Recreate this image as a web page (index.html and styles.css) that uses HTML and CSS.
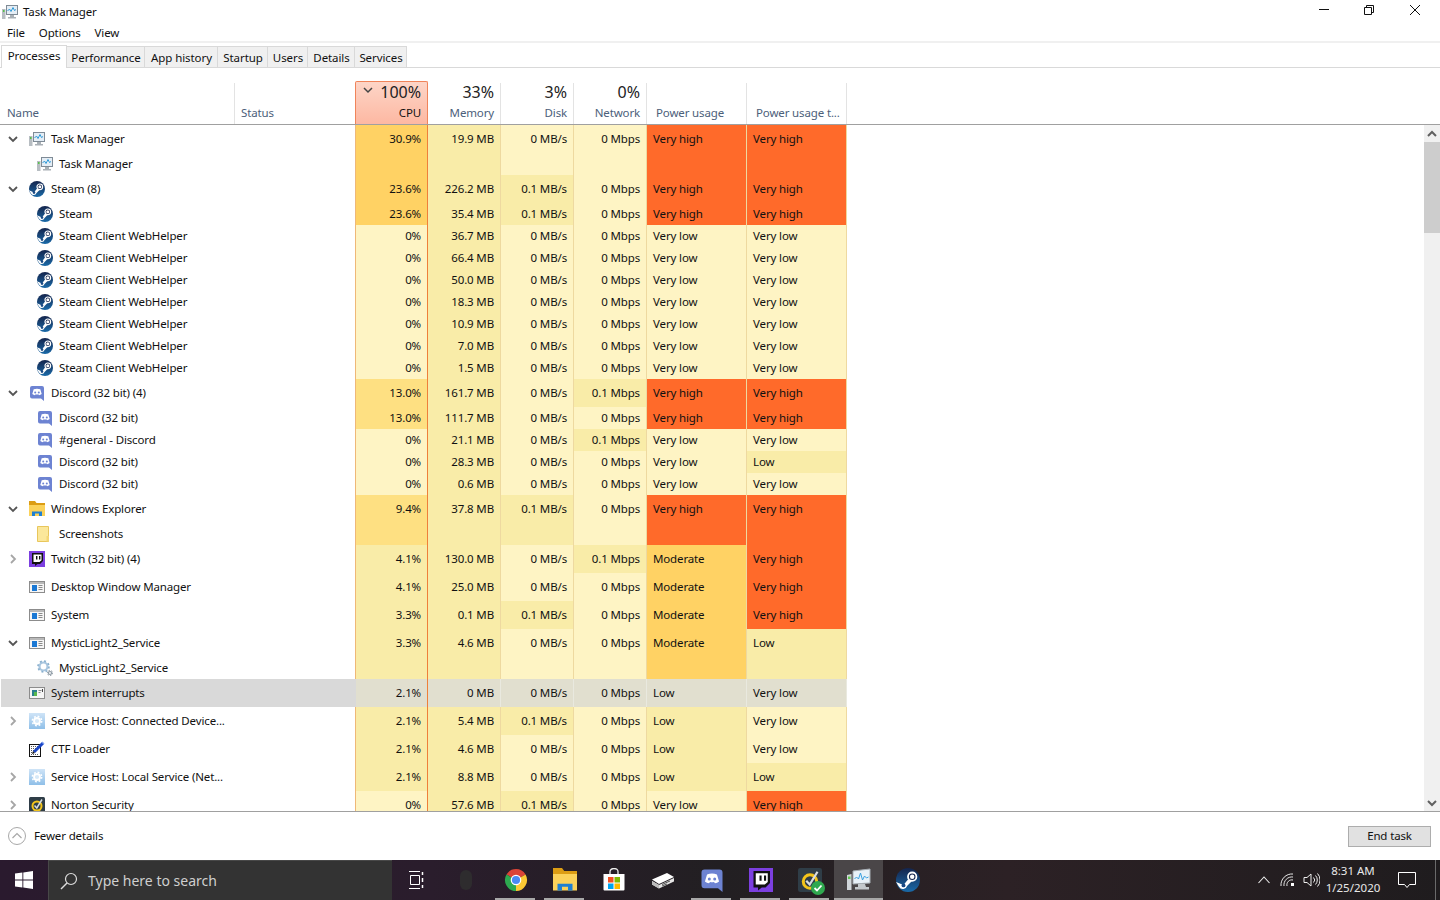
FILE: index.html
```html
<!DOCTYPE html>
<html lang="en">
<head>
<meta charset="utf-8">
<title>Task Manager</title>
<link rel="stylesheet" href="styles.css">
</head>
<body>
<svg class="defs" aria-hidden="true">
  <defs>
    <linearGradient id="g-steam" x1="0" y1="0" x2="0" y2="1"><stop offset="0" stop-color="#14244c"/><stop offset="1" stop-color="#1a6aa8"/></linearGradient>
    <linearGradient id="g-svc" x1="0" y1="0" x2="0" y2="1"><stop offset="0" stop-color="#cfe4f7"/><stop offset="1" stop-color="#8fbfe8"/></linearGradient>
    <symbol id="chev-d" viewBox="0 0 10 10"><path d="M1 3l4 4 4-4" fill="none" stroke="#555" stroke-width="1.800"/></symbol>
    <symbol id="chev-r" viewBox="0 0 10 10"><path d="M3 1l4 4-4 4" fill="none" stroke="#a6a6a6" stroke-width="1.800"/></symbol>
    <symbol id="i-tm" viewBox="0 0 16 16">
      <rect x="4.500" y="1.500" width="11" height="9" fill="#e4edf5" stroke="#7f8b96"/>
      <path d="M5.500 7l2-2 1.500 2.500 2-4 1.500 3 1.500-1" fill="none" stroke="#2f9ad8"/>
      <path d="M8 11h4v2h2v1.500H6V13h2z" fill="#a9b0b6"/>
      <rect x="0" y="5" width="3.500" height="10" fill="#b7bdc2"/>
      <rect x="1" y="6" width="1.500" height="2" fill="#58c24a"/>
    </symbol>
    <symbol id="i-steam" viewBox="0 0 16 16">
      <circle cx="8" cy="8" r="8" fill="url(#g-steam)"/>
      <path d="M0 9.300l5 2.100 3-3.800 3 .8-3.500 3.500A3 3 0 0 1 2 12.500z" fill="#fff"/>
      <circle cx="10.800" cy="5.800" r="2.800" fill="#14244c" stroke="#fff" stroke-width="1.200"/>
      <circle cx="10.800" cy="5.800" r="1.500" fill="#fff"/>
      <circle cx="5" cy="11.600" r="1.300" fill="#1a4a84"/>
    </symbol>
    <symbol id="i-discord" viewBox="0 0 16 16">
      <path d="M3 1h10a2 2 0 0 1 2 2v13l-3-2.500H3a2 2 0 0 1-2-2V3a2 2 0 0 1 2-2z" fill="#6d83d2"/>
      <path d="M4.700 4.300q3.300-1.300 6.600 0l1.400 4.700q-1.200 1.100-2.700 1.200l-.7-.9q-1.300.4-2.600 0l-.7.9Q4.500 10.100 3.300 9z" fill="#fff"/>
      <circle cx="6.200" cy="7.400" r="1" fill="#6d83d2"/><circle cx="9.800" cy="7.400" r="1" fill="#6d83d2"/>
    </symbol>
    <symbol id="i-folder" viewBox="0 0 16 16">
      <path d="M0 0h6l1.500 2H16v6H0z" fill="#dc9d14"/>
      <rect x="0" y="4" width="16" height="11" fill="#fbd25a"/>
      <path d="M3 15v-4.500h10V15h-3v-2.500H6V15z" fill="#1f80d2"/>
    </symbol>
    <symbol id="i-page" viewBox="0 0 16 16">
      <path d="M.5.500h11v15H.5z" fill="#fbe79a" stroke="#e8c65c"/>
      <path d="M9.500 10h2.500v5.500H9.500z" fill="#f4d675"/>
    </symbol>
    <symbol id="i-twitch" viewBox="0 0 16 16">
      <rect width="16" height="16" fill="#7c3fe0"/>
      <path d="M3 2h11v8l-3 3H8.500L6 15v-2H3z" fill="#111"/>
      <path d="M4.500 3.500h8v5.800l-2 1.700h-6z" fill="#fff"/>
      <rect x="7" y="5" width="1.400" height="3.500" fill="#111"/><rect x="10" y="5" width="1.400" height="3.500" fill="#111"/>
    </symbol>
    <symbol id="i-win" viewBox="0 0 16 16">
      <rect x=".5" y="2.500" width="15" height="11" fill="#f6f6f6" stroke="#8c8c8c"/>
      <rect x="1" y="3" width="14" height="2" fill="#b9b9b9"/>
      <rect x="3" y="6" width="5" height="6" fill="#1a78d4"/>
      <path d="M9.500 6.500h4M9.500 8.500h4M9.500 10.500h4" stroke="#8a8a8a"/>
    </symbol>
    <symbol id="i-int" viewBox="0 0 16 16">
      <rect x=".5" y="2.500" width="15" height="11" fill="#f6f6f6" stroke="#8c8c8c"/>
      <rect x="3" y="5" width="5" height="6" fill="#2a7f8e"/>
      <rect x="5" y="7" width="3" height="4" fill="#58b84e"/>
      <path d="M9.500 5.500h3M9.500 7.500h2" stroke="#8a8a8a"/><rect x="13" y="4" width="1" height="3" fill="#444"/>
    </symbol>
    <symbol id="i-gear" viewBox="0 0 16 16">
      <circle cx="6.500" cy="6.500" r="4" fill="#fff" stroke="#a9c6df" stroke-width="2.200"/>
      <circle cx="6.500" cy="6.500" r="5.500" fill="none" stroke="#87aecd" stroke-width="1.600" stroke-dasharray="2 2.300"/>
      <circle cx="13" cy="13" r="1.500" fill="#fff" stroke="#8c9aa5" stroke-width="1.200"/>
      <circle cx="13" cy="13" r="2.600" fill="none" stroke="#7d8b96" stroke-width="1" stroke-dasharray="1.300 1.300"/>
    </symbol>
    <symbol id="i-svc" viewBox="0 0 16 16">
      <rect width="16" height="16" fill="url(#g-svc)"/>
      <circle cx="8" cy="8" r="3" fill="#d7e9f8" stroke="#fff" stroke-width="1.800"/>
      <circle cx="8" cy="8" r="4.700" fill="none" stroke="#fff" stroke-width="1.500" stroke-dasharray="1.800 1.900"/>
    </symbol>
    <symbol id="i-ctf" viewBox="0 0 16 16">
      <rect x=".5" y="3.500" width="11" height="12" fill="#fff" stroke="#111"/>
      <path d="M2 5.500h8M2 7.500h6M2 9.500h5M2 11.500h4M2 13.500h7" stroke="#555" stroke-dasharray="1 1"/>
      <path d="M5 11L14 2" stroke="#1b46c8" stroke-width="3"/>
      <path d="M3 13l1-3 2 2z" fill="#111"/><path d="M13.500 .5l2 2-1 1-2-2z" fill="#7fa0f0"/>
    </symbol>
    <symbol id="i-norton" viewBox="0 0 16 16">
      <rect width="16" height="16" rx="1.500" fill="#2f3d47"/>
      <circle cx="8" cy="9" r="4.500" fill="none" stroke="#f3c41b" stroke-width="2"/>
      <path d="M5.500 8.500l2.300 2.500L13 2.500" fill="none" stroke="#d9dde0" stroke-width="1.500"/>
    </symbol>
    <symbol id="i-chrome" viewBox="0 0 24 24">
      <path d="M12 12L2.470 6.500A11 11 0 0 1 21.530 6.500z" fill="#db4437"/>
      <path d="M12 12L21.530 6.500A11 11 0 0 1 12 23z" fill="#fcc934"/>
      <path d="M12 12L12 23A11 11 0 0 1 2.470 6.500z" fill="#2da94f"/>
      <circle cx="12" cy="12" r="5.300" fill="#fff"/><circle cx="12" cy="12" r="4.100" fill="#4a8af4"/>
    </symbol>
    <symbol id="i-store" viewBox="0 0 24 24">
      <path d="M8 7V3.500a4 3 0 0 1 8 0V7" fill="none" stroke="#eee" stroke-width="1.300"/>
      <path d="M1.500 6h21v15.500a1 1 0 0 1-1 1h-19a1 1 0 0 1-1-1z" fill="#fff"/>
      <rect x="6" y="9" width="5.500" height="5.500" fill="#f25022"/><rect x="12.500" y="9" width="5.500" height="5.500" fill="#7fba00"/>
      <rect x="6" y="15.500" width="5.500" height="5.500" fill="#00a4ef"/><rect x="12.500" y="15.500" width="5.500" height="5.500" fill="#ffb900"/>
    </symbol>
    <symbol id="i-box" viewBox="0 0 24 24">
      <path d="M1 11.500L16 5l7 4-15 7z" fill="#fff"/>
      <path d="M1 13l7 4 15-7v3.500L8 20.500l-7-4z" fill="#e4e4e4"/>
      <path d="M1 13l7 4v3.500l-7-4z" fill="#bcbcbc"/>
      <path d="M11 16.500l8-3.500M11 18l5-2" stroke="#555"/>
    </symbol>
    <symbol id="i-tmbig" viewBox="0 0 24 24">
      <path d="M6 3l17-2v14L6 16z" fill="#e8f1f8" stroke="#a6adb3"/>
      <path d="M7.500 11l2-2 2 2 2-6 2 7 2-4 2 2 2-1" fill="none" stroke="#3aa0e0"/>
      <path d="M11 16h7l1 3h3v2.500H8V19h3z" fill="#c3c8cc"/>
      <path d="M0 7l4.500-1v16H0z" fill="#d0d5d9"/><rect x="1" y="8.500" width="2.500" height="2.500" fill="#60c850"/>
    </symbol>
  </defs>
</svg>

<div class="app">
  <header class="titlebar">
    <svg class="ico"><use href="#i-tm"/></svg>
    <span class="title">Task Manager</span>
    <div class="winbtns">
      <div class="winbtn"><svg width="12" height="12" viewBox="0 0 12 12"><path d="M2 5.500h10" stroke="#111"/></svg></div>
      <div class="winbtn"><svg width="12" height="12" viewBox="0 0 12 12"><path d="M1.500 3.500h7v7h-7zM3.500 3.500v-2h7v7h-2" fill="none" stroke="#111"/></svg></div>
      <div class="winbtn"><svg width="12" height="12" viewBox="0 0 12 12"><path d="M1 1l10 10M11 1L1 11" stroke="#111"/></svg></div>
    </div>
  </header>
  <nav class="menu"><span>File</span><span>Options</span><span>View</span></nav>
  <div class="tabs">
    <div class="tab active">Processes</div>
    <div class="tab w78">Performance</div>
    <div class="tab w73">App history</div>
    <div class="tab w50">Startup</div>
    <div class="tab w40">Users</div>
    <div class="tab w47">Details</div>
    <div class="tab w52">Services</div>
  </div>

  <div class="thead">
    <div class="th left">Name</div>
    <div class="th left">Status</div>
    <div class="th cpuh"><div class="pct"><svg class="sort" viewBox="0 0 10 10"><path d="M1 3l4 4 4-4" fill="none" stroke="#444" stroke-width="1.500"/></svg>100%</div><div class="lab">CPU</div></div>
    <div class="th"><div class="pct">33%</div><div class="lab">Memory</div></div>
    <div class="th"><div class="pct">3%</div><div class="lab">Disk</div></div>
    <div class="th"><div class="pct">0%</div><div class="lab">Network</div></div>
    <div class="th left pw">Power usage</div>
    <div class="th left pw">Power usage t...</div>
  </div>

  <div class="tbody">
    <div class="rows">
      <div class="row"><div class="name"><svg class="chev"><use href="#chev-d"/></svg><svg class="ico"><use href="#i-tm"/></svg><span>Task Manager</span></div><div class="c cpu o">30.9%</div><div class="c m">19.9 MB</div><div class="c p">0 MB/s</div><div class="c p">0 Mbps</div><div class="t r">Very high</div><div class="t r">Very high</div></div>
      <div class="row sub"><div class="name"><svg class="ico"><use href="#i-tm"/></svg><span>Task Manager</span></div><div class="c cpu o"></div><div class="c m"></div><div class="c p"></div><div class="c p"></div><div class="t r"></div><div class="t r"></div></div>
      <div class="row"><div class="name"><svg class="chev"><use href="#chev-d"/></svg><svg class="ico"><use href="#i-steam"/></svg><span>Steam (8)</span></div><div class="c cpu o">23.6%</div><div class="c m">226.2 MB</div><div class="c m">0.1 MB/s</div><div class="c p">0 Mbps</div><div class="t r">Very high</div><div class="t r">Very high</div></div>
      <div class="row sub"><div class="name"><svg class="ico"><use href="#i-steam"/></svg><span>Steam</span></div><div class="c cpu o">23.6%</div><div class="c m">35.4 MB</div><div class="c m">0.1 MB/s</div><div class="c p">0 Mbps</div><div class="t r">Very high</div><div class="t r">Very high</div></div>
      <div class="row sub"><div class="name"><svg class="ico"><use href="#i-steam"/></svg><span>Steam Client WebHelper</span></div><div class="c cpu p">0%</div><div class="c m">36.7 MB</div><div class="c p">0 MB/s</div><div class="c p">0 Mbps</div><div class="t p">Very low</div><div class="t p">Very low</div></div>
      <div class="row sub"><div class="name"><svg class="ico"><use href="#i-steam"/></svg><span>Steam Client WebHelper</span></div><div class="c cpu p">0%</div><div class="c m">66.4 MB</div><div class="c p">0 MB/s</div><div class="c p">0 Mbps</div><div class="t p">Very low</div><div class="t p">Very low</div></div>
      <div class="row sub"><div class="name"><svg class="ico"><use href="#i-steam"/></svg><span>Steam Client WebHelper</span></div><div class="c cpu p">0%</div><div class="c m">50.0 MB</div><div class="c p">0 MB/s</div><div class="c p">0 Mbps</div><div class="t p">Very low</div><div class="t p">Very low</div></div>
      <div class="row sub"><div class="name"><svg class="ico"><use href="#i-steam"/></svg><span>Steam Client WebHelper</span></div><div class="c cpu p">0%</div><div class="c m">18.3 MB</div><div class="c p">0 MB/s</div><div class="c p">0 Mbps</div><div class="t p">Very low</div><div class="t p">Very low</div></div>
      <div class="row sub"><div class="name"><svg class="ico"><use href="#i-steam"/></svg><span>Steam Client WebHelper</span></div><div class="c cpu p">0%</div><div class="c m">10.9 MB</div><div class="c p">0 MB/s</div><div class="c p">0 Mbps</div><div class="t p">Very low</div><div class="t p">Very low</div></div>
      <div class="row sub"><div class="name"><svg class="ico"><use href="#i-steam"/></svg><span>Steam Client WebHelper</span></div><div class="c cpu p">0%</div><div class="c m">7.0 MB</div><div class="c p">0 MB/s</div><div class="c p">0 Mbps</div><div class="t p">Very low</div><div class="t p">Very low</div></div>
      <div class="row sub"><div class="name"><svg class="ico"><use href="#i-steam"/></svg><span>Steam Client WebHelper</span></div><div class="c cpu p">0%</div><div class="c m">1.5 MB</div><div class="c p">0 MB/s</div><div class="c p">0 Mbps</div><div class="t p">Very low</div><div class="t p">Very low</div></div>
      <div class="row"><div class="name"><svg class="chev"><use href="#chev-d"/></svg><svg class="ico"><use href="#i-discord"/></svg><span>Discord (32 bit) (4)</span></div><div class="c cpu a">13.0%</div><div class="c m">161.7 MB</div><div class="c p">0 MB/s</div><div class="c m">0.1 Mbps</div><div class="t r">Very high</div><div class="t r">Very high</div></div>
      <div class="row sub"><div class="name"><svg class="ico"><use href="#i-discord"/></svg><span>Discord (32 bit)</span></div><div class="c cpu a">13.0%</div><div class="c m">111.7 MB</div><div class="c p">0 MB/s</div><div class="c p">0 Mbps</div><div class="t r">Very high</div><div class="t r">Very high</div></div>
      <div class="row sub"><div class="name"><svg class="ico"><use href="#i-discord"/></svg><span>#general - Discord</span></div><div class="c cpu p">0%</div><div class="c m">21.1 MB</div><div class="c p">0 MB/s</div><div class="c m">0.1 Mbps</div><div class="t p">Very low</div><div class="t p">Very low</div></div>
      <div class="row sub"><div class="name"><svg class="ico"><use href="#i-discord"/></svg><span>Discord (32 bit)</span></div><div class="c cpu p">0%</div><div class="c m">28.3 MB</div><div class="c p">0 MB/s</div><div class="c p">0 Mbps</div><div class="t p">Very low</div><div class="t m">Low</div></div>
      <div class="row sub"><div class="name"><svg class="ico"><use href="#i-discord"/></svg><span>Discord (32 bit)</span></div><div class="c cpu p">0%</div><div class="c m">0.6 MB</div><div class="c p">0 MB/s</div><div class="c p">0 Mbps</div><div class="t p">Very low</div><div class="t p">Very low</div></div>
      <div class="row"><div class="name"><svg class="chev"><use href="#chev-d"/></svg><svg class="ico"><use href="#i-folder"/></svg><span>Windows Explorer</span></div><div class="c cpu a">9.4%</div><div class="c m">37.8 MB</div><div class="c m">0.1 MB/s</div><div class="c p">0 Mbps</div><div class="t r">Very high</div><div class="t r">Very high</div></div>
      <div class="row sub"><div class="name"><svg class="ico"><use href="#i-page"/></svg><span>Screenshots</span></div><div class="c cpu a"></div><div class="c m"></div><div class="c m"></div><div class="c p"></div><div class="t r"></div><div class="t r"></div></div>
      <div class="row"><div class="name"><svg class="chev"><use href="#chev-r"/></svg><svg class="ico"><use href="#i-twitch"/></svg><span>Twitch (32 bit) (4)</span></div><div class="c cpu m">4.1%</div><div class="c m">130.0 MB</div><div class="c p">0 MB/s</div><div class="c m">0.1 Mbps</div><div class="t o">Moderate</div><div class="t r">Very high</div></div>
      <div class="row"><div class="name"><i class="nochev"></i><svg class="ico"><use href="#i-win"/></svg><span>Desktop Window Manager</span></div><div class="c cpu m">4.1%</div><div class="c m">25.0 MB</div><div class="c p">0 MB/s</div><div class="c p">0 Mbps</div><div class="t o">Moderate</div><div class="t r">Very high</div></div>
      <div class="row"><div class="name"><i class="nochev"></i><svg class="ico"><use href="#i-win"/></svg><span>System</span></div><div class="c cpu m">3.3%</div><div class="c m">0.1 MB</div><div class="c m">0.1 MB/s</div><div class="c p">0 Mbps</div><div class="t o">Moderate</div><div class="t r">Very high</div></div>
      <div class="row"><div class="name"><svg class="chev"><use href="#chev-d"/></svg><svg class="ico"><use href="#i-win"/></svg><span>MysticLight2_Service</span></div><div class="c cpu m">3.3%</div><div class="c m">4.6 MB</div><div class="c p">0 MB/s</div><div class="c p">0 Mbps</div><div class="t o">Moderate</div><div class="t m">Low</div></div>
      <div class="row sub"><div class="name"><svg class="ico"><use href="#i-gear"/></svg><span>MysticLight2_Service</span></div><div class="c cpu m"></div><div class="c m"></div><div class="c p"></div><div class="c p"></div><div class="t o"></div><div class="t m"></div></div>
      <div class="row selected"><div class="name"><i class="nochev"></i><svg class="ico"><use href="#i-int"/></svg><span>System interrupts</span></div><div class="c cpu">2.1%</div><div class="c">0 MB</div><div class="c">0 MB/s</div><div class="c">0 Mbps</div><div class="t">Low</div><div class="t">Very low</div></div>
      <div class="row"><div class="name"><svg class="chev"><use href="#chev-r"/></svg><svg class="ico"><use href="#i-svc"/></svg><span>Service Host: Connected Device...</span></div><div class="c cpu m">2.1%</div><div class="c m">5.4 MB</div><div class="c m">0.1 MB/s</div><div class="c p">0 Mbps</div><div class="t m">Low</div><div class="t p">Very low</div></div>
      <div class="row"><div class="name"><i class="nochev"></i><svg class="ico"><use href="#i-ctf"/></svg><span>CTF Loader</span></div><div class="c cpu m">2.1%</div><div class="c m">4.6 MB</div><div class="c p">0 MB/s</div><div class="c p">0 Mbps</div><div class="t m">Low</div><div class="t p">Very low</div></div>
      <div class="row"><div class="name"><svg class="chev"><use href="#chev-r"/></svg><svg class="ico"><use href="#i-svc"/></svg><span>Service Host: Local Service (Net...</span></div><div class="c cpu m">2.1%</div><div class="c m">8.8 MB</div><div class="c p">0 MB/s</div><div class="c p">0 Mbps</div><div class="t m">Low</div><div class="t m">Low</div></div>
      <div class="row"><div class="name"><svg class="chev"><use href="#chev-r"/></svg><svg class="ico"><use href="#i-norton"/></svg><span>Norton Security</span></div><div class="c cpu p">0%</div><div class="c m">57.6 MB</div><div class="c m">0.1 MB/s</div><div class="c p">0 Mbps</div><div class="t p">Very low</div><div class="t r">Very high</div></div>
    </div>
    <div class="scrollbar">
      <div class="sbtn"><svg width="10" height="8" viewBox="0 0 10 8"><path d="M1 6l4-4 4 4" fill="none" stroke="#606060" stroke-width="2"/></svg></div>
      <div class="thumb"></div>
      <div class="strack"></div>
      <div class="sbtn"><svg width="10" height="8" viewBox="0 0 10 8"><path d="M1 2l4 4 4-4" fill="none" stroke="#606060" stroke-width="2"/></svg></div>
    </div>
  </div>

  <footer class="foot">
    <div class="fewer">
      <svg width="18" height="18" viewBox="0 0 18 18"><circle cx="9" cy="9" r="8.500" fill="none" stroke="#a8a8a8"/><path d="M4.500 11l4.500-4.500 4.500 4.500" fill="none" stroke="#a8a8a8" stroke-width="1.200"/></svg>
      <span>Fewer details</span>
    </div>
    <button class="endtask">End task</button>
  </footer>

  <div class="taskbar">
    <div class="start"><svg width="18" height="18" viewBox="0 0 18 18"><path d="M0 2.600l7.400-1v7H0zM8.300 1.400L18 0v8.600H8.300zM0 9.500h7.400v7L0 15.400zM8.300 9.500H18V18l-9.700-1.400z" fill="#fff"/></svg></div>
    <div class="search">
      <svg width="18" height="18" viewBox="0 0 18 18"><circle cx="11" cy="7" r="5.500" fill="none" stroke="#ddd" stroke-width="1.200"/><path d="M7 11l-6 6" stroke="#ddd" stroke-width="1.400"/></svg>
      <span>Type here to search</span>
    </div>
    <div class="slot s48"><svg width="16" height="18" viewBox="0 0 16 18"><path d="M1 .5h11M1 17.500h11M2.500 4.500h9v9h-9z" fill="none" stroke="#fff"/><path d="M14.500 1v3M14.500 14v3M14.500 7v4" stroke="#fff" stroke-width="1.500"/></svg></div>
    <div class="slot s51"><svg width="14" height="22" viewBox="0 0 14 22"><rect x="1" y="1" width="12" height="20" rx="6" fill="#2e2c2e"/></svg></div>
    <div class="slot on"><svg class="tb"><use href="#i-chrome"/></svg></div>
    <div class="slot on"><svg class="tb"><use href="#i-folder"/></svg></div>
    <div class="slot"><svg class="tb"><use href="#i-store"/></svg></div>
    <div class="slot"><svg class="tb"><use href="#i-box"/></svg></div>
    <div class="slot on"><svg class="tb"><use href="#i-discord"/></svg></div>
    <div class="slot on"><svg class="tb"><use href="#i-twitch"/></svg></div>
    <div class="slot on">
      <span class="stack"><svg class="tb"><use href="#i-norton"/></svg>
      <svg class="badge" viewBox="0 0 14 14"><circle cx="7" cy="7" r="7" fill="#2fa84f"/><path d="M3.500 7l2.500 2.500 4.500-5" fill="none" stroke="#fff" stroke-width="1.800"/></svg></span>
    </div>
    <div class="slot active"><svg class="tb"><use href="#i-tmbig"/></svg></div>
    <div class="slot"><svg class="tb"><use href="#i-steam"/></svg></div>
    <div class="tray">
      <div class="tr w25"><svg width="12" height="8" viewBox="0 0 12 8"><path d="M.5 7l5.500-6 5.500 6" fill="none" stroke="#eee" stroke-width="1.100"/></svg></div>
      <div class="tr w24"><svg width="16" height="14" viewBox="0 0 16 14"><path d="M1 13A11 11 0 0 1 13 1M4 13a8 8 0 0 1 9-9M7 13a5 5 0 0 1 6-6" fill="none" stroke="#e8e8e8"/><rect x="11" y="10" width="3" height="3" fill="#fff"/></svg></div>
      <div class="tr w22"><svg width="17" height="16" viewBox="0 0 17 16"><path d="M1 5.500h3L8 2v12l-4-3.500H1z" fill="none" stroke="#eee"/><path d="M10.500 5.500a3.500 3.500 0 0 1 0 5M12.500 3.500a6.500 6.500 0 0 1 0 9M14.500 1.500a9.500 9.500 0 0 1 0 13" fill="none" stroke="#eee"/></svg></div>
      <div class="clock"><div>8:31 AM</div><div>1/25/2020</div></div>
      <div class="tr w46"><svg width="18" height="16" viewBox="0 0 18 16"><path d="M.5.500h17v12h-6L9 15.500 6.500 12.500h-6z" fill="none" stroke="#fff"/></svg></div>
      <div class="desk"></div>
    </div>
  </div>
</div>
</body>
</html>
```

FILE: styles.css
```css
* { box-sizing: border-box; }
html, body { margin: 0; padding: 0; height: 100%; }
body { background: #fff; color: #111; font: 11.5px/16px "Noto Sans", "Liberation Sans", sans-serif; letter-spacing: -.14px; overflow: hidden; }
.defs { position: absolute; width: 0; height: 0; }
.app { width: 1440px; height: 900px; display: flex; flex-direction: column; }
.ico { width: 16px; height: 16px; flex: none; }

.titlebar { height: 23px; display: flex; align-items: center; padding: 1px 2px 0 2px; }
.title { margin-left: 5px; }
.winbtns { margin-left: auto; display: flex; align-self: flex-start; }
.winbtn { width: 46px; height: 18px; display: flex; align-items: center; justify-content: center; }

.menu { height: 20px; display: flex; align-items: center; gap: 14px; padding: 1px 0 0 7px; border-bottom: 2px solid #f0f0f0; }

.tabs { height: 25px; display: flex; align-items: flex-end; border-bottom: 1px solid #d9d9d9; padding-left: 1px; flex: none; }
.tab { height: 21px; background: #f0f0f0; border: 1px solid #d9d9d9; border-left: 0; border-bottom: 0; text-align: center; line-height: 21px; letter-spacing: -.08px; padding-left: 1px; }
.tab.active { width: 66px; height: 23px; background: #fff; border-left: 1px solid #d9d9d9; line-height: 20px; margin-bottom: -1px; position: relative; padding-left: 0; }
.w78 { width: 78px; } .w73 { width: 73px; } .w50 { width: 50px; } .w40 { width: 40px; } .w47 { width: 47px; } .w52 { width: 52px; }

.thead { height: 57px; flex: none; display: grid; grid-template-columns: 235px 120px 73px 73px 73px 73px 100px 100px; align-items: end; border-bottom: 1px solid #a0a0a0; }
.th { height: 41px; border-right: 1px solid #e3e3e3; text-align: right; padding-right: 6px; color: #4c607a; display: flex; flex-direction: column; justify-content: flex-end; }
.th.left { text-align: left; padding: 0 0 3px 7px; }
.th.left:nth-child(2) { padding-left: 6px; border-right: 0; }
.th.left.pw { padding-left: 9px; }
.pct { font-size: 16px; line-height: 20px; letter-spacing: 0; color: #222; display: flex; justify-content: flex-end; margin-bottom: 1px; }
.lab { height: 20px; line-height: 20px; margin-bottom: 1px; }
.cpuh { height: 43px; color: #111; background: linear-gradient(#fdd5c7, #fdb8a2); border: 1px solid #f0845a; border-bottom: 0; border-radius: 2px 2px 0 0; position: relative; }
.sort { position: absolute; left: 7px; top: 3px; width: 10px; height: 10px; }

.tbody { height: 686px; flex: none; display: flex; overflow: hidden; }
.rows { flex: 1; min-width: 0; overflow: hidden; }
.row { height: 28px; display: grid; grid-template-columns: 355px 73px 73px 73px 73px 100px 100px; }
.row.sub { height: 22px; }
.name { display: flex; align-items: center; padding-left: 8px; gap: 6px; white-space: nowrap; }
.sub .name { padding-left: 37px; }
.chev { width: 10px; height: 10px; margin-right: 5px; flex: none; }
.nochev { width: 10px; margin-right: 5px; flex: none; }
.c, .t { display: flex; align-items: center; border-right: 1px solid #eed9a0; white-space: nowrap; }
.c { justify-content: flex-end; padding-right: 6px; }
.t { padding-left: 6px; }
.cpu { border-left: 1px solid #efb877; border-right: 1px solid #ef7f3a; }
.p { background: #fef4c4; }
.m { background: #f9eca8; }
.a { background: #fee082; }
.o { background: #ffd264; }
.r { background: #ff6a2a; }
.selected .name { background: #d9d9d9; margin-left: 1px; padding-left: 7px; }
.selected .c, .selected .t { background: #e1dfcf; border-right-color: #e9e9df; }
.selected .cpu { border-right-color: #ef7f3a; border-left-color: #d9d9d9; }

.scrollbar { width: 16px; flex: none; background: #f0f0f0; display: flex; flex-direction: column; }
.sbtn { height: 17px; display: flex; align-items: center; justify-content: center; flex: none; }
.thumb { height: 91px; background: #cdcdcd; flex: none; }
.strack { flex: 1; }

.foot { flex: none; height: 49px; border-top: 1px solid #a0a0a0; display: flex; align-items: center; justify-content: space-between; padding: 0 9px 0 8px; }
.fewer { display: flex; align-items: center; gap: 8px; }
.fewer svg { display: block; }
.endtask { width: 83px; height: 21px; padding: 0; border: 1px solid #adadad; background: #e1e1e1; font: inherit; letter-spacing: inherit; color: #111; }

.taskbar { flex: none; height: 40px; display: flex; color: #fff; background: linear-gradient(90deg, #2a1a2e 0, #2a1d2c 30%, #221f22 50%, #2c2125 70%, #1f1c1e 100%); }
.start { width: 48px; display: flex; align-items: center; justify-content: center; }
.search { width: 344px; background: #333; border-top: 1px solid #484848; border-left: 1px solid #484848; display: flex; align-items: center; gap: 10px; padding-left: 11px; font-size: 14px; letter-spacing: 0; color: #cfcfcf; }
.slot { width: 49px; flex: none; display: flex; align-items: center; justify-content: center; position: relative; }
.s48 { width: 48px; } .s51 { width: 51px; }
.slot.on::after { content: ""; position: absolute; left: 4px; right: 5px; bottom: 0; height: 2px; background: #a8a8a8; }
.slot.active { background: #4a4648; }
.slot.active::after { content: ""; position: absolute; left: 0; right: 0; bottom: 0; height: 2px; background: #a8a8a8; }
.tb { width: 24px; height: 24px; display: block; }
.stack { position: relative; display: block; width: 24px; height: 24px; }
.badge { position: absolute; right: -3px; bottom: -3px; width: 14px; height: 14px; }
.tray { margin-left: auto; display: flex; align-items: center; height: 100%; }
.tr { display: flex; align-items: center; justify-content: center; height: 100%; }
.w25 { width: 25px; } .w24 { width: 24px; } .w22 { width: 22px; } .w46 { width: 46px; }
.clock { width: 62px; text-align: center; line-height: 17px; color: #e8e8e8; padding-bottom: 2px; letter-spacing: 0; }
.desk { width: 10px; height: 100%; background: linear-gradient(90deg, transparent 5px, #6a6a6a 5px, #6a6a6a 6px, transparent 6px); }
```
